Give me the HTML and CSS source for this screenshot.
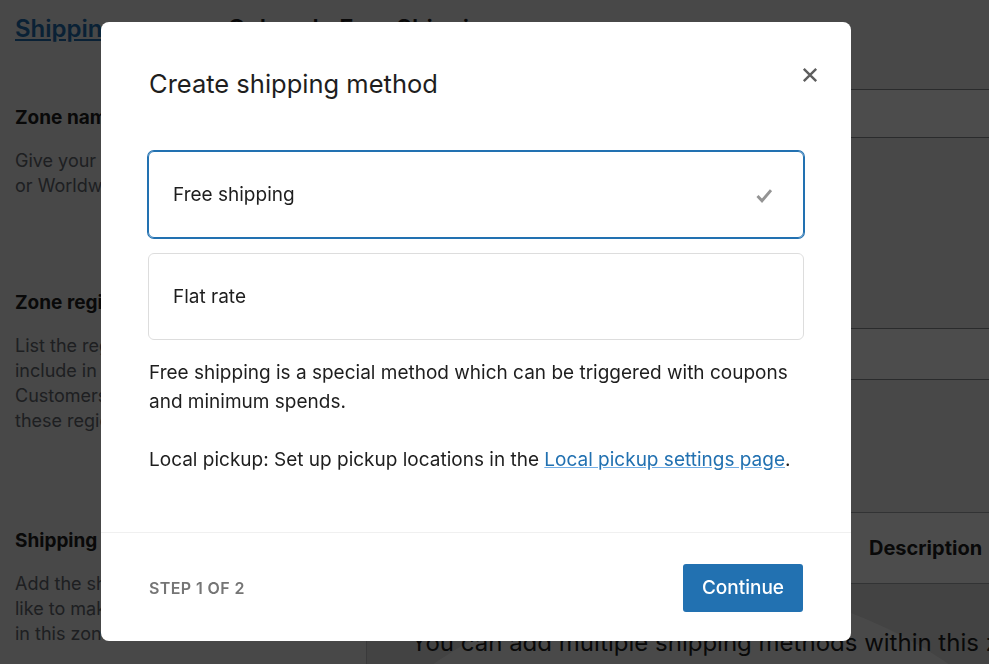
FILE: index.html
```html
<!DOCTYPE html>
<html>
<head>
<meta charset="utf-8">
<meta name="viewport" content="width=device-width, initial-scale=1.0"/>
<title>Create shipping method</title>
<link rel="stylesheet" href="styles.css">
</head>
<body>

<div class="page">
  <div class="page-title">
    <a href="#" class="crumb">Shipping zones</a>
    <span class="crumb-sep">&rsaquo;</span>
    <span class="zone-title">Colorado Free Shipping</span>
  </div>

  <div class="section section-name">
    <div class="section-info">
      <h3>Zone name</h3>
      <p>Give your zone a name! E.g. Local, or Worldwide.</p>
    </div>
    <div class="section-field">
      <div class="text-input"></div>
    </div>
  </div>

  <div class="section section-regions">
    <div class="section-info">
      <h3>Zone regions</h3>
      <p>List the regions you'd like to include in your shipping zone. Customers will be matched against these regions.</p>
    </div>
    <div class="section-field">
      <div class="text-input tall"></div>
    </div>
  </div>

  <div class="section section-methods">
    <div class="section-info">
      <h3>Shipping methods</h3>
      <p>Add the shipping methods you'd like to make available to customers in this zone.</p>
    </div>
    <div class="section-field">
      <div class="methods-table">
        <div class="table-head">
          <div class="th th-title">Title</div>
          <div class="th th-enabled">Enabled</div>
          <div class="th">Description</div>
        </div>
        <div class="table-body">
          <div class="blank-circle"></div>
          <p class="blank-text">You can add multiple shipping methods within this zone.<br>Only customers within the zone will see them.</p>
        </div>
      </div>
    </div>
  </div>
</div>

<div class="overlay"></div>

<div class="modal">
  <div class="modal-head">
    <h1>Create shipping method</h1>
    <button class="close-btn" aria-label="Close">
      <svg width="16" height="16" viewBox="0 0 16 16"><path d="M1.8 1.8 L14.2 14.2 M14.2 1.8 L1.8 14.2" stroke="#5e5e5e" stroke-width="2.4" fill="none"/></svg>
    </button>
  </div>

  <div class="modal-body">
    <div class="option selected">
      <span>Free shipping</span>
      <svg class="check" width="16" height="16" viewBox="0 0 16 16"><polyline points="1.5,8 6,12.8 15,2.2" stroke="#949494" stroke-width="2.9" fill="none"/></svg>
    </div>
    <div class="option">
      <span>Flat rate</span>
    </div>
    <p class="note">Free shipping is a special method which can be triggered with coupons and minimum spends.</p>
    <p class="note">Local pickup: Set up pickup locations in the <a href="#">Local pickup settings page</a>.</p>
  </div>

  <div class="modal-foot">
    <span class="step">Step 1 of 2</span>
    <button class="primary-btn">Continue</button>
  </div>
</div>

</body>
</html>
```

FILE: styles.css
```css
body {
  margin: 0;
  background: #f0f0f1;
  font-family: Inter, "Noto Sans", sans-serif;
  color: #1e1e1e;
  overflow: hidden;
}

/* page behind the dialog */
.page {
  padding: 12px 0 0 15px;
  width: 1100px;
}
.page-title {
  display: flex;
  align-items: center;
  gap: 12px;
  height: 32px;
  font-size: 24px;
  font-weight: 600;
}
.crumb { color: #2271b1; }
.crumb-sep { color: #50575e; }

.section {
  display: grid;
  grid-template-columns: 336px 1fr;
  gap: 15px;
  align-items: start;
}
.section-name { margin-top: 61px; }
.section-regions { margin-top: 92px; }
.section-methods { margin-top: 95px; }

.section-info h3 {
  margin: 0 0 17px;
  font-size: 19px;
  line-height: 26px;
  font-weight: 700;
}
.section-info p {
  margin: 0;
  width: 303px;
  font-size: 18px;
  line-height: 25px;
  color: #646970;
}

.text-input {
  height: 47px;
  background: #fff;
  border-top: 1px solid #8c8f94;
  border-bottom: 1px solid #8c8f94;
  margin-top: -16px;
}
.text-input.tall {
  height: 50px;
  margin-top: 38px;
}

.methods-table {
  margin-top: -16px;
  border-left: 1px solid #c3c4c7;
}
.table-head {
  display: flex;
  align-items: center;
  height: 70px;
  padding-left: 22px;
  background: #fff;
  border-top: 1px solid #a7aaad;
  border-bottom: 1px solid #a7aaad;
  font-size: 20px;
  font-weight: 700;
}
.th-title { width: 300px; }
.th-enabled { width: 180px; }

.table-body {
  position: relative;
  height: 200px;
  background: #e0e0e0;
  overflow: hidden;
}
.blank-circle {
  position: absolute;
  left: -131px;
  top: 0;
  width: 910px;
  height: 910px;
  border-radius: 50%;
  background: #f5f5f5;
}
.blank-text {
  position: relative;
  margin: 0;
  padding: 43px 0 0 44px;
  font-size: 24px;
  line-height: 32px;
  color: #1e1e1e;
}

.overlay {
  position: fixed;
  inset: 0;
  background: rgba(0, 0, 0, 0.7);
}

/* dialog */
.modal {
  position: fixed;
  left: 101px;
  top: 22px;
  width: 750px;
  height: 619px;
  background: #fff;
  border-radius: 8px;
  display: flex;
  flex-direction: column;
}
.modal-head {
  display: flex;
  justify-content: space-between;
  align-items: flex-start;
  padding: 45px 47px 0 48px;
}
.modal-head h1 {
  margin: 0;
  font-size: 25.5px;
  line-height: 33px;
  font-weight: 400;
  color: #1e1e1e;
}
.close-btn {
  display: flex;
  align-items: center;
  justify-content: center;
  width: 24px;
  height: 24px;
  margin: -4px -18px 0 0;
  padding: 0;
  border: none;
  background: none;
  cursor: pointer;
}

.modal-body {
  flex: 1;
  padding: 51px 47px 0;
}
.option {
  display: flex;
  align-items: center;
  justify-content: space-between;
  height: 85px;
  padding: 0 31px 0 24px;
  border: 1px solid #ddd;
  border-radius: 6px;
  font-size: 19px;
  margin-bottom: 15px;
}
.option.selected {
  border-color: #2271b1;
  box-shadow: 0 0 0 1px #2271b1;
}
.check { margin-top: 2px; }

.note {
  margin: 0 0 29px 1px;
  font-size: 19px;
  line-height: 29px;
}
.modal-body .option + .option { margin-bottom: 18px; }
.note a {
  color: #2271b1;
  text-decoration-color: #72aee6;
}

.modal-foot {
  display: flex;
  align-items: center;
  justify-content: space-between;
  height: 107px;
  padding: 1px 48px 0 48px;
  border-top: 1px solid #f0f0f0;
}
.step {
  font-size: 16px;
  font-weight: 600;
  color: #757575;
  text-transform: uppercase;
  letter-spacing: 0.4px;
}
.primary-btn {
  height: 48px;
  padding: 0 19px;
  border: none;
  border-radius: 3px;
  background: #2271b1;
  color: #fff;
  font-family: Inter, "Noto Sans", sans-serif;
  font-size: 19px;
  font-weight: 500;
  cursor: pointer;
}
```
